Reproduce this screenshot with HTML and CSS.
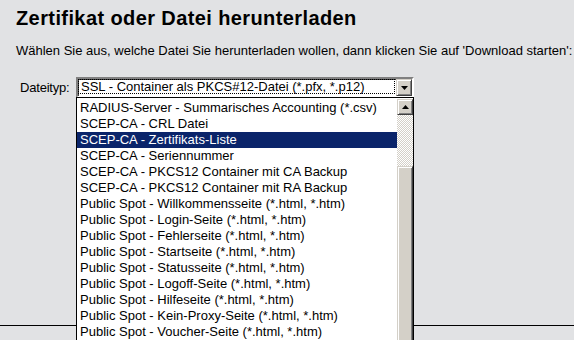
FILE: index.html
```html
<!DOCTYPE html>
<html lang="de">
<head>
  <meta charset="UTF-8">
  <title>Zertifikat oder Datei herunterladen</title>
  <link rel="stylesheet" href="styles.css">
</head>
<body>
  <div class="content">
    <h1>Zertifikat oder Datei herunterladen</h1>

    <p class="intro">Wählen Sie aus, welche Datei Sie herunterladen wollen, dann klicken Sie auf 'Download starten':</p>

    <div class="row">
      <label>Dateityp:</label>
      <div class="select">
        <span class="value"><span class="focus">SSL - Container als PKCS#12-Datei (*.pfx, *.p12)</span></span>
        <span class="btn">
          <svg width="7" height="4" viewBox="0 0 7 4"><path d="M0 0h7L3.5 4z" fill="#000"/></svg>
        </span>
      </div>
    </div>
  </div>

  <!-- aufgeklappte Liste -->
  <div class="list">
    <ul class="items">
      <li>RADIUS-Server - Summarisches Accounting (*.csv)</li>
      <li>SCEP-CA - CRL Datei</li>
      <li class="selected">SCEP-CA - Zertifikats-Liste</li>
      <li>SCEP-CA - Seriennummer</li>
      <li>SCEP-CA - PKCS12 Container mit CA Backup</li>
      <li>SCEP-CA - PKCS12 Container mit RA Backup</li>
      <li>Public Spot - Willkommensseite (*.html, *.htm)</li>
      <li>Public Spot - Login-Seite (*.html, *.htm)</li>
      <li>Public Spot - Fehlerseite (*.html, *.htm)</li>
      <li>Public Spot - Startseite (*.html, *.htm)</li>
      <li>Public Spot - Statusseite (*.html, *.htm)</li>
      <li>Public Spot - Logoff-Seite (*.html, *.htm)</li>
      <li>Public Spot - Hilfeseite (*.html, *.htm)</li>
      <li>Public Spot - Kein-Proxy-Seite (*.html, *.htm)</li>
      <li>Public Spot - Voucher-Seite (*.html, *.htm)</li>
    </ul>
    <div class="scrollbar">
      <span class="sbtn">
        <svg width="7" height="4" viewBox="0 0 7 4"><path d="M0 4h7L3.5 0z" fill="#000"/></svg>
      </span>
      <span class="track"></span>
      <span class="thumb"></span>
    </div>
  </div>
</body>
</html>
```

FILE: styles.css
```css
body {
  margin: 0;
  background: #e1e2e4;
  font-family: "Liberation Sans", Arial, sans-serif;
  font-size: 13px;
  color: #000;
  overflow: hidden;
}

.content {
  height: 318px;
  padding: 7px 0 0 16px;
  border-bottom: 1px solid #000;
}

h1 {
  margin: 0;
  font-size: 20px;
  line-height: 22px;
  font-weight: bold;
  letter-spacing: 0.4px;
}

.intro {
  margin: 14px 0 0;
  line-height: 16px;
  white-space: nowrap;
}

.row {
  display: flex;
  align-items: center;
  margin-top: 18px;
  padding-left: 4px;
}

label {
  width: 56px;
  letter-spacing: -0.2px;
}

.select {
  display: flex;
  width: 334px;
  height: 17px;
  background: #fff;
  border: 2px solid;
  border-color: #808080 #fff #fff #808080;
  box-shadow: inset 1px 1px 0 #404040;
}

.value {
  flex: 1;
  padding: 1px 2px 1px 1px;
}

.focus {
  display: block;
  height: 13px;
  line-height: 14px;
  padding-left: 2px;
  outline: 1px dotted #000;
  outline-offset: 0;
}

.btn, .sbtn {
  display: flex;
  align-items: center;
  justify-content: center;
  width: 16px;
  background: #d4d0c8;
  box-sizing: border-box;
  border: 1px solid;
  border-color: #d4d0c8 #404040 #404040 #d4d0c8;
  box-shadow: inset 1px 1px 0 #fff, inset -1px -1px 0 #808080;
}

.btn {
  height: 17px;
}

.list {
  position: absolute;
  left: 76px;
  top: 97px;
  width: 336px;
  height: 242px;
  display: flex;
  background: #fff;
  border: 1px solid #000;
  border-bottom: none;
  overflow: hidden;
}

.items {
  flex: 1;
  margin: 0;
  padding: 2px 0 0;
  list-style: none;
}

.items li {
  height: 16px;
  line-height: 16px;
  padding-left: 3px;
  white-space: nowrap;
}

.items li.selected {
  background: #0a246a;
  color: #fff;
}

.scrollbar {
  width: 16px;
  display: flex;
  flex-direction: column;
  padding-top: 1px;
}

.sbtn {
  height: 16px;
}

.track {
  height: 51px;
  background: repeating-conic-gradient(#d4d0c8 0 25%, #fff 0 50%) 0 0 / 2px 2px;
}

.thumb {
  flex: 1;
  background: #d4d0c8;
  box-sizing: border-box;
  border: 1px solid;
  border-bottom: none;
  border-color: #d4d0c8 #404040 #404040 #d4d0c8;
  box-shadow: inset 1px 1px 0 #fff, inset -1px 0 0 #808080;
}
```
